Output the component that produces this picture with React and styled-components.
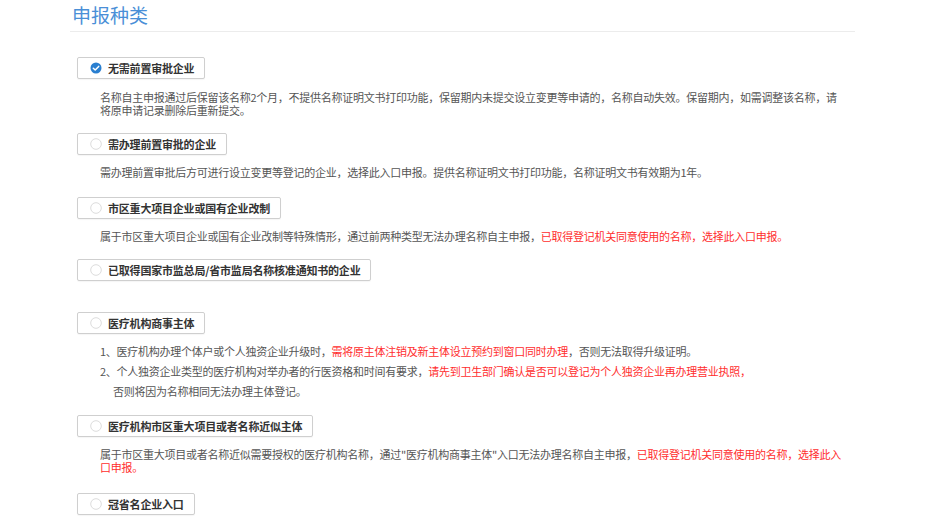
import React from 'react';
import styled, { createGlobalStyle } from 'styled-components';

const GlobalStyle = createGlobalStyle`
  html, body {
    margin: 0;
    padding: 0;
    background: #fff;
  }
  body {
    font-family: "Noto Sans CJK SC", "Liberation Sans", sans-serif;
  }
`;

const Page = styled.div`
  width: 930px;
  height: 524px;
  overflow: hidden;
  padding: 3px 0 0 70px;
  box-sizing: border-box;
`;

const Panel = styled.div`
  width: 785px;
`;

const Title = styled.h2`
  margin: 0;
  padding: 0 0 4px 2px;
  font-size: 19px;
  line-height: 24px;
  font-weight: normal;
  color: #4a8fd7;
  border-bottom: 1px solid #ececec;
  font-family: "Noto Sans CJK SC", sans-serif;
`;

const List = styled.div`
  display: flex;
  flex-direction: column;
  padding: 25px 0 0 7px;
`;

const Item = styled.div`
  display: flex;
  flex-direction: column;
  align-items: flex-start;
  margin-bottom: ${p => p.$space}px;
`;

const OptionBox = styled.div`
  display: flex;
  align-items: center;
  gap: 6px;
  height: 22px;
  box-sizing: border-box;
  padding: 0 10px 0 12px;
  border: 1px solid #cfcfcf;
  border-radius: 2px;
  background: #fff;
  box-shadow: 0 1px 1px rgba(0, 0, 0, 0.04);
  cursor: pointer;
`;

const Label = styled.span`
  font-family: "Noto Sans CJK SC", sans-serif;
  font-size: 11px;
  font-weight: bold;
  color: #333;
  line-height: 1;
  letter-spacing: -0.2px;
`;

const Desc = styled.p`
  margin: ${p => p.$top}px 0 0 23px;
  width: 743px;
  font-family: "Noto Sans CJK SC", sans-serif;
  font-size: 11px;
  letter-spacing: -0.25px;
  line-height: ${p => p.$lh || 13}px;
  color: #555;
`;

const Line = styled.div`
  padding-left: ${p => p.$indent || 0}px;
`;

const Red = styled.span`
  color: #ff2d2d;
`;

const Radio = ({ checked }) =>
  checked ? (
    <svg width="12" height="12" viewBox="0 0 12 12">
      <circle cx="6" cy="6" r="5.5" fill="#2a7fd0" />
      <path d="M3.3 6.2 L5.2 8 L8.7 4.4" fill="none" stroke="#fff" strokeWidth="1.5" strokeLinecap="round" strokeLinejoin="round" />
    </svg>
  ) : (
    <svg width="12" height="12" viewBox="0 0 12 12">
      <circle cx="6" cy="6" r="5.3" fill="#fff" stroke="#dcdcdc" strokeWidth="1" />
    </svg>
  );

const Option = ({ checked, children }) =>
  <OptionBox>
    <Radio checked={checked} />
    <Label>{children}</Label>
  </OptionBox>;

export default function App() {
  return (
    <Page>
      <GlobalStyle />
      <Panel>
        <Title>申报种类</Title>
        <List>
          <Item $space={16}>
            <Option checked>无需前置审批企业</Option>
            <Desc $top={12}>
              名称自主申报通过后保留该名称2个月，不提供名称证明文书打印功能，保留期内未提交设立变更等申请的，名称自动失效。保留期内，如需调整该名称，请将原申请记录删除后重新提交。
            </Desc>
          </Item>
          <Item $space={18}>
            <Option>需办理前置审批的企业</Option>
            <Desc $top={11}>
              需办理前置审批后方可进行设立变更等登记的企业，选择此入口申报。提供名称证明文书打印功能，名称证明文书有效期为1年。
            </Desc>
          </Item>
          <Item $space={16}>
            <Option>市区重大项目企业或国有企业改制</Option>
            <Desc $top={11}>
              属于市区重大项目企业或国有企业改制等特殊情形，通过前两种类型无法办理名称自主申报，<Red>已取得登记机关同意使用的名称，选择此入口申报。</Red>
            </Desc>
          </Item>
          <Item $space={31}>
            <Option>已取得国家市监总局/省市监局名称核准通知书的企业</Option>
          </Item>
          <Item $space={14}>
            <Option>医疗机构商事主体</Option>
            <Desc as="div" $top={7} $lh={20}>
              <Line>1、医疗机构办理个体户或个人独资企业升级时，<Red>需将原主体注销及新主体设立预约到窗口同时办理</Red>，否则无法取得升级证明。</Line>
              <Line>2、个人独资企业类型的医疗机构对举办者的行医资格和时间有要求，<Red>请先到卫生部门确认是否可以登记为个人独资企业再办理营业执照，</Red></Line>
              <Line $indent={13}>否则将因为名称相同无法办理主体登记。</Line>
            </Desc>
          </Item>
          <Item $space={19}>
            <Option>医疗机构市区重大项目或者名称近似主体</Option>
            <Desc $top={11}>
              属于市区重大项目或者名称近似需要授权的医疗机构名称，通过"医疗机构商事主体"入口无法办理名称自主申报，<Red>已取得登记机关同意使用的名称，选择此入口申报。</Red>
            </Desc>
          </Item>
          <Item $space={0}>
            <Option>冠省名企业入口</Option>
          </Item>
        </List>
      </Panel>
    </Page>
  );
}
